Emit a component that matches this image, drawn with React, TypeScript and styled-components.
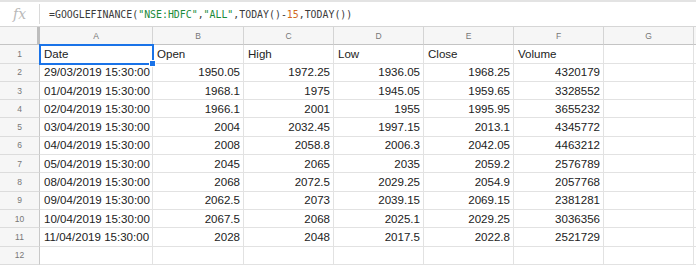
import React from "react";
import styled, { createGlobalStyle } from "styled-components";

const Global = createGlobalStyle`
  html, body { margin: 0; padding: 0; background: #fff; }
  body { font-family: "Liberation Sans", Arial, sans-serif; overflow: hidden; }
`;

const Page = styled.div`
  width: 696px;
  height: 270px;
  overflow: hidden;
  background: #fff;
`;

const FormulaBar = styled.div`
  display: flex;
  align-items: center;
  height: 24px;
  border-top: 2px solid #e3e3e3;
  border-bottom: 1px solid #d6d6d6;
`;

const FxBox = styled.div`
  width: 40px;
  height: 20px;
  display: flex;
  align-items: center;
  justify-content: center;
  border-right: 1px solid #dadada;
  font-family: "DejaVu Serif", "Liberation Serif", serif;
  font-style: italic;
  font-size: 14px;
  color: #b9b9b9;
  box-sizing: border-box;
`;

const Formula = styled.div`
  padding-left: 9px;
  font-family: "DejaVu Sans Mono", "Liberation Mono", monospace;
  font-size: 9.9px;
  color: #3c3c3c;
  white-space: pre;
`;

const Str = styled.span`
  color: #1a8a3a;
`;
const Num = styled.span`
  color: #d2691e;
`;

const Grid = styled.div`
  display: grid;
  grid-template-columns: 40px 113px 91px 90px 90px 90px 90px 90px 1fr;
  grid-auto-rows: 18.3px;
`;

const ColHead = styled.div<{ $corner?: boolean }>`
  height: 18px;
  background: #f6f6f6;
  border-right: 1px solid ${(p) => (p.$corner ? "#bdbdbd" : "#d4d4d4")};
  border-right-width: ${(p) => (p.$corner ? "3px" : "1px")};
  border-bottom: 1px solid #c4c4c4;
  box-sizing: border-box;
  display: flex;
  align-items: center;
  justify-content: center;
  font-size: 8.5px;
  color: #777;
`;

const RowHead = styled.div`
  background: #f6f6f6;
  border-right: 1px solid #c8c8c8;
  border-bottom: 1px solid #dcdcdc;
  box-sizing: border-box;
  display: flex;
  align-items: center;
  justify-content: center;
  font-size: 8.5px;
  color: #777;
`;

const Cell = styled.div<{ $num?: boolean; $sel?: boolean }>`
  position: relative;
  border-right: 1px solid #e2e2e2;
  border-bottom: 1px solid #e2e2e2;
  box-sizing: border-box;
  display: flex;
  align-items: center;
  justify-content: ${(p) => (p.$num ? "flex-end" : "flex-start")};
  padding: 0 3px 0 4px;
  font-size: 11.55px;
  color: #222;
  white-space: nowrap;
  overflow: visible;
  ${(p) =>
    p.$sel
      ? `
    outline: 2px solid #1a73e8;
    outline-offset: -1px;
    z-index: 2;
  `
      : ""}
`;

const Handle = styled.span`
  position: absolute;
  right: -4px;
  bottom: -4px;
  width: 5px;
  height: 5px;
  background: #1a73e8;
  border: 1px solid #fff;
`;

const cols = ["A", "B", "C", "D", "E", "F", "G", ""];

const header = ["Date", "Open", "High", "Low", "Close", "Volume"];

const data: string[][] = [
  ["29/03/2019 15:30:00", "1950.05", "1972.25", "1936.05", "1968.25", "4320179"],
  ["01/04/2019 15:30:00", "1968.1", "1975", "1945.05", "1959.65", "3328552"],
  ["02/04/2019 15:30:00", "1966.1", "2001", "1955", "1995.95", "3655232"],
  ["03/04/2019 15:30:00", "2004", "2032.45", "1997.15", "2013.1", "4345772"],
  ["04/04/2019 15:30:00", "2008", "2058.8", "2006.3", "2042.05", "4463212"],
  ["05/04/2019 15:30:00", "2045", "2065", "2035", "2059.2", "2576789"],
  ["08/04/2019 15:30:00", "2068", "2072.5", "2029.25", "2054.9", "2057768"],
  ["09/04/2019 15:30:00", "2062.5", "2073", "2039.15", "2069.15", "2381281"],
  ["10/04/2019 15:30:00", "2067.5", "2068", "2025.1", "2029.25", "3036356"],
  ["11/04/2019 15:30:00", "2028", "2048", "2017.5", "2022.8", "2521729"],
];

export default function App() {
  return (
    <Page>
      <Global />
      <FormulaBar>
        <FxBox>fx</FxBox>
        <Formula>
          =GOOGLEFINANCE(<Str>"NSE:HDFC"</Str>,<Str>"ALL"</Str>,TODAY()-<Num>15</Num>,TODAY())
        </Formula>
      </FormulaBar>
      <Grid>
        <ColHead $corner />
        {cols.map((c, i) => (
          <ColHead key={i}>{c}</ColHead>
        ))}
        <RowHead>1</RowHead>
        {header.map((h, i) => (
          <Cell key={i} $sel={i === 0}>
            {h}
            {i === 0 && <Handle />}
          </Cell>
        ))}
        <Cell />
        <Cell />
        {data.map((row, r) => (
          <React.Fragment key={r}>
            <RowHead>{r + 2}</RowHead>
            {row.map((v, i) => (
              <Cell key={i} $num={i > 0}>
                {v}
              </Cell>
            ))}
            <Cell />
            <Cell />
          </React.Fragment>
        ))}
        <RowHead>12</RowHead>
        {[0, 1, 2, 3, 4, 5, 6, 7].map((i) => (
          <Cell key={i} />
        ))}
      </Grid>
    </Page>
  );
}
